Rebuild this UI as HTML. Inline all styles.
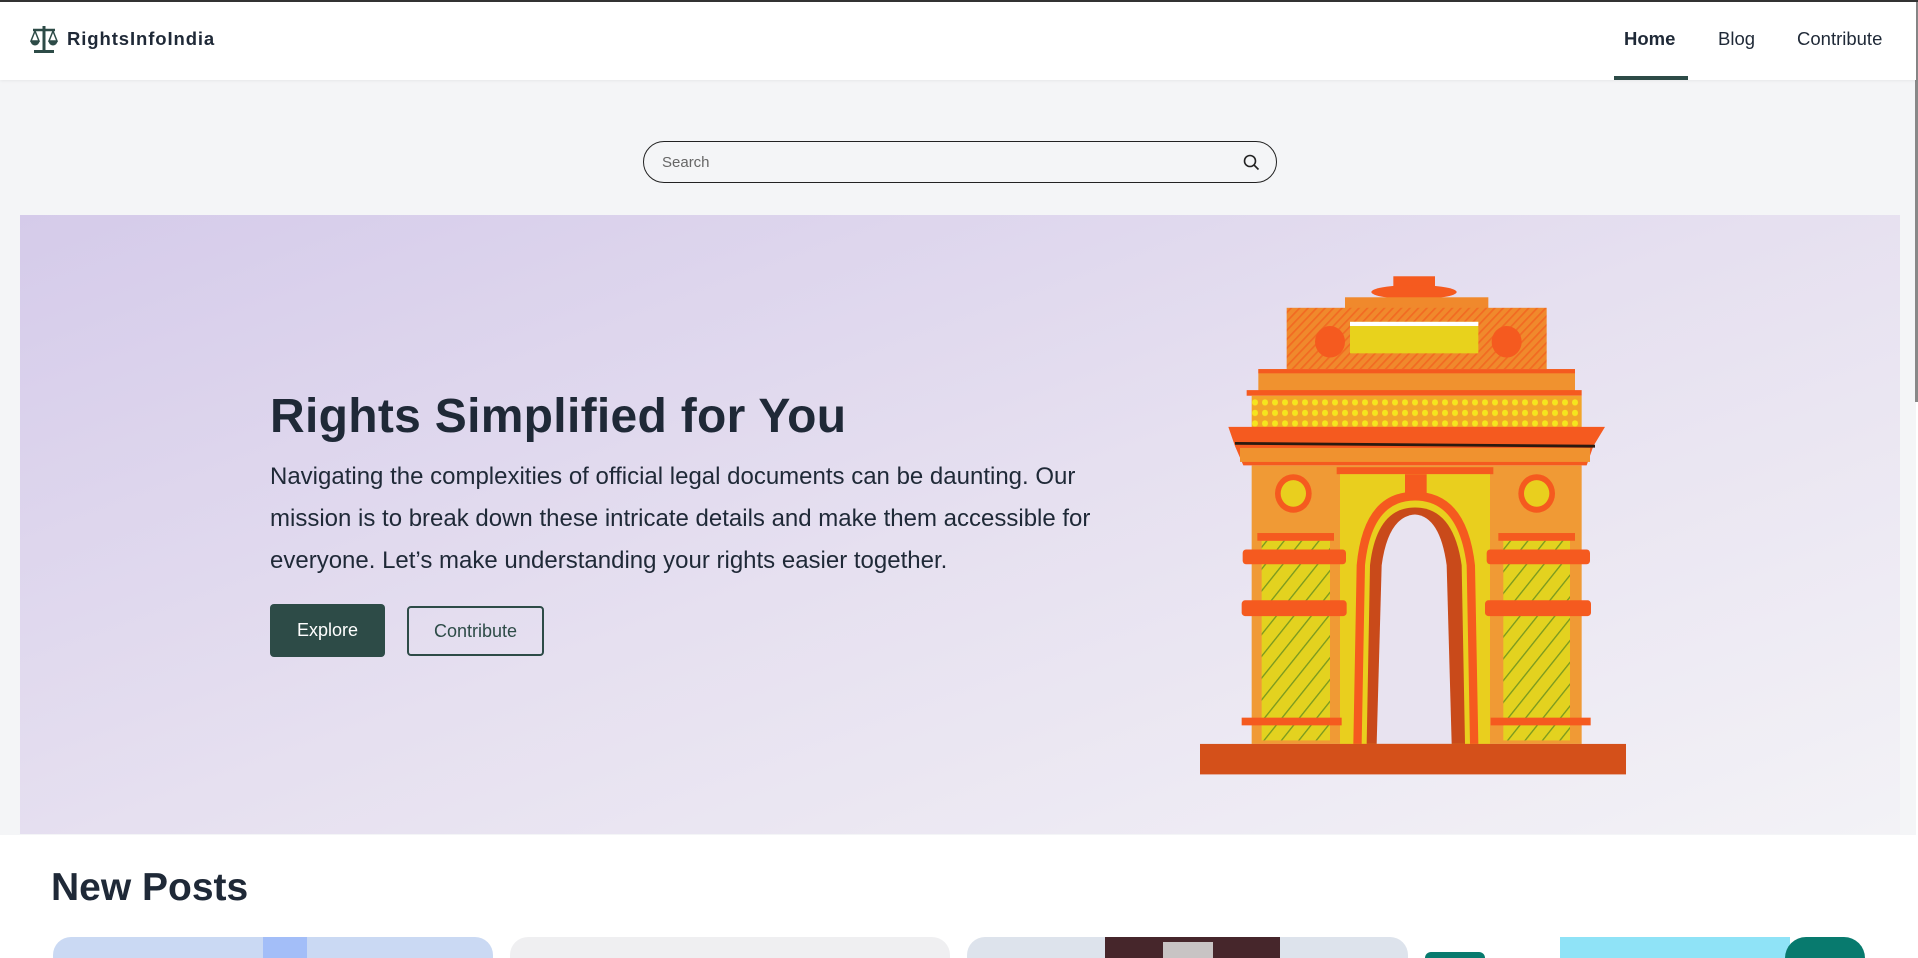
<!DOCTYPE html>
<html><head><meta charset="utf-8"><style>
*{margin:0;padding:0;box-sizing:border-box}
html,body{width:1918px;height:958px;overflow:hidden}
body{background:#fff;font-family:"Liberation Sans",sans-serif;color:#1f2937;position:relative}
.top{position:absolute;left:0;top:0;width:1918px;height:2px;background:#333}
.hdr{position:absolute;left:0;top:2px;width:1916px;height:78px;background:#fff;box-shadow:0 1px 3px rgba(0,0,0,.06);z-index:2}
.logo{position:absolute;left:30px;top:22px;display:flex;align-items:center}
.logo span{font-weight:bold;font-size:18.5px;letter-spacing:.9px;margin-left:9px;color:#1f2937}
.nav a{position:absolute;top:26px;font-size:18.5px;color:#1f2937;text-decoration:none}
.ul{position:absolute;left:1614px;top:74px;width:74px;height:4px;background:#2d4b47}
.grey{position:absolute;left:0;top:80px;width:1916px;height:755px;background:#f4f5f7}
.search{position:absolute;left:643px;top:141px;width:634px;height:42px;border:1px solid #222;border-radius:21px;background:#f4f5f7}
.search span{position:absolute;left:18px;top:12px;font-size:15px;color:#666}
.hero{position:absolute;left:20px;top:215px;width:1880px;height:619px;background:linear-gradient(160deg,#d5cbea 0%,#e6e0f0 50%,#f3f2f6 100%)}
h1{position:absolute;left:270px;top:389px;font-size:48px;font-weight:bold;color:#1f2937;letter-spacing:.3px}
p.d{position:absolute;left:270px;top:456px;white-space:nowrap;font-size:24px;line-height:42px;color:#1f2937}
.b1{position:absolute;left:270px;top:604px;width:115px;height:53px;background:#2d4b47;color:#fff;border-radius:4px;font-size:18px;text-align:center;line-height:53px}
.b2{position:absolute;left:407px;top:606px;width:137px;height:50px;border:2px solid #2d4b47;color:#2d4b47;border-radius:4px;font-size:18px;text-align:center;line-height:46px}
h2{position:absolute;left:51px;top:866px;font-size:39px;font-weight:bold;color:#1f2937}
.card{position:absolute;top:937px;height:21px;border-radius:18px 18px 0 0;overflow:hidden}
.sb{position:absolute;right:0;top:2px;width:3px;height:400px;background:#888}
</style></head><body>
<div class="top"></div>
<div class="grey"></div>
<div class="hdr">
 <div class="logo"><svg width="28" height="30" viewBox="0 0 28 30"><g fill="#2d4b47" stroke="#2d4b47"><rect x="12.5" y="2" width="3" height="24" stroke="none"/><rect x="4" y="26" width="20" height="3" stroke="none"/><line x1="3" y1="6" x2="25" y2="6" stroke-width="2.5"/><path d="M1 17 L5 7 L9 17 Z" fill="none" stroke-width="1.5"/><path d="M0.5 17 h9 a4.5 4.5 0 0 1 -9 0Z" stroke="none"/><path d="M19 17 L23 7 L27 17 Z" fill="none" stroke-width="1.5"/><path d="M18.5 17 h9 a4.5 4.5 0 0 1 -9 0Z" stroke="none"/></g></svg><span>RightsInfoIndia</span></div>
 <div class="nav"><a style="left:1624px;font-weight:bold">Home</a><a style="left:1718px">Blog</a><a style="left:1797px">Contribute</a></div>
 <div class="ul" style="top:74px"></div>
</div>
<div class="search"><span>Search</span><svg style="position:absolute;right:16px;top:12px" width="17" height="17" viewBox="0 0 17 17"><circle cx="7" cy="7" r="5.5" fill="none" stroke="#222" stroke-width="1.6"/><line x1="11" y1="11" x2="15.5" y2="15.5" stroke="#222" stroke-width="1.6"/></svg></div>
<div class="hero"></div>
<h1>Rights Simplified for You</h1>
<p class="d">Navigating the complexities of official legal documents can be daunting. Our<br>mission is to break down these intricate details and make them accessible for<br>everyone. Let’s make understanding your rights easier together.</p>
<div class="b1">Explore</div><div class="b2">Contribute</div>
<svg style="position:absolute;left:1150px;top:250px" width="500" height="578" viewBox="0 0 1500 1650" preserveAspectRatio="none">
<defs>
<pattern id="h1" width="18" height="18" patternUnits="userSpaceOnUse" patternTransform="rotate(45)"><rect width="18" height="18" fill="#f0892c"/><rect width="5" height="18" fill="#f26a22"/></pattern>
<pattern id="h2" width="40" height="40" patternUnits="userSpaceOnUse" patternTransform="rotate(40)"><rect width="40" height="40" fill="#e3d21f"/><rect width="4" height="40" fill="#7a9a1f"/></pattern>
<pattern id="dt" width="30" height="30" patternUnits="userSpaceOnUse"><rect width="30" height="30" fill="#f2a52a"/><circle cx="15" cy="15" r="9" fill="#f5e51e"/></pattern>
</defs>
<rect x="730" y="75" width="125" height="35" fill="#f55a1f"/>
<ellipse cx="792" cy="120" rx="128" ry="20" fill="#f55a1f"/>
<rect x="585" y="135" width="430" height="35" fill="#f0892c"/>
<rect x="410" y="165" width="780" height="175" fill="url(#h1)"/>
<rect x="600" y="205" width="385" height="90" fill="#e8d21c"/>
<rect x="600" y="205" width="385" height="12" fill="#fff"/>
<circle cx="540" cy="262" r="45" fill="#f55a1f"/><circle cx="1070" cy="262" r="45" fill="#f55a1f"/>
<rect x="325" y="340" width="950" height="65" fill="#f0922f"/>
<rect x="325" y="340" width="950" height="12" fill="#f55a1f"/>
<rect x="290" y="400" width="1005" height="16" fill="#f55a1f"/>
<rect x="305" y="416" width="990" height="90" fill="url(#dt)"/>
<polygon points="235,505 1365,505 1330,560 1310,615 280,615 255,560" fill="#f55a1f"/>
<rect x="270" y="565" width="1050" height="40" fill="#f0922f"/>
<path d="M255 552 L1335 560" stroke="#2a1a10" stroke-width="8"/>
<rect x="305" y="615" width="990" height="795" fill="#f09a35"/>
<rect x="560" y="620" width="470" height="20" fill="#f55a1f"/>
<rect x="570" y="640" width="450" height="770" fill="#e9cf1e"/>
<path d="M610 1410 L620 900 Q640 690 795 690 Q950 690 975 900 L985 1410 Z" fill="#f55a1f"/>
<path d="M635 1410 L645 900 Q665 715 795 715 Q925 715 950 900 L960 1410 Z" fill="#e9cf1e"/>
<path d="M650 1410 L660 900 Q680 735 795 735 Q910 735 935 900 L945 1410 Z" fill="#c94a1a"/>
<path d="M680 1410 L695 900 Q715 760 795 755 Q870 760 890 900 L905 1410 Z" fill="#e8e3f0"/>
<rect x="765" y="640" width="65" height="70" fill="#f55a1f"/>
<circle cx="430" cy="695" r="55" fill="#f55a1f"/><circle cx="430" cy="695" r="38" fill="#e9cf1e"/>
<circle cx="1160" cy="695" r="55" fill="#f55a1f"/><circle cx="1160" cy="695" r="38" fill="#e9cf1e"/>
<rect x="335" y="830" width="205" height="570" fill="url(#h2)"/>
<rect x="1060" y="830" width="200" height="570" fill="url(#h2)"/>
<g fill="#f55a1f">
<rect x="322" y="808" width="230" height="22"/><rect x="1045" y="808" width="230" height="22"/>
<rect x="278" y="855" width="310" height="42" rx="10"/><rect x="1010" y="855" width="310" height="42" rx="10"/>
<rect x="275" y="1000" width="315" height="45" rx="10"/><rect x="1005" y="1000" width="318" height="45" rx="10"/>
<rect x="275" y="1335" width="300" height="22"/><rect x="1022" y="1335" width="300" height="22"/>
</g>
<rect x="150" y="1410" width="1278" height="87" fill="#d4501a"/>
</svg>
<h2>New Posts</h2>
<div class="card" style="left:53px;width:440px;background:#cad9f3"><div style="position:absolute;left:210px;top:0;width:44px;height:21px;background:#a3bef8"></div></div>
<div class="card" style="left:510px;width:440px;background:#efeff1"></div>
<div class="card" style="left:967px;width:441px;background:#dde3ec"><div style="position:absolute;left:138px;top:0;width:175px;height:21px;background:#46262b"></div><div style="position:absolute;left:196px;top:5px;width:50px;height:16px;background:#c8c4c4"></div></div>
<div class="card" style="left:1425px;width:443px;background:#fff"><div style="position:absolute;left:135px;top:0;width:230px;height:21px;background:#8fe3f7"></div><div style="position:absolute;left:0;top:15px;width:60px;height:6px;background:#087a6e;border-radius:30px 30px 0 0"></div><div style="position:absolute;left:360px;top:0;width:80px;height:21px;background:#087a6e;border-radius:40px 40px 0 0"></div></div>
<div class="sb"></div>
</body></html>
